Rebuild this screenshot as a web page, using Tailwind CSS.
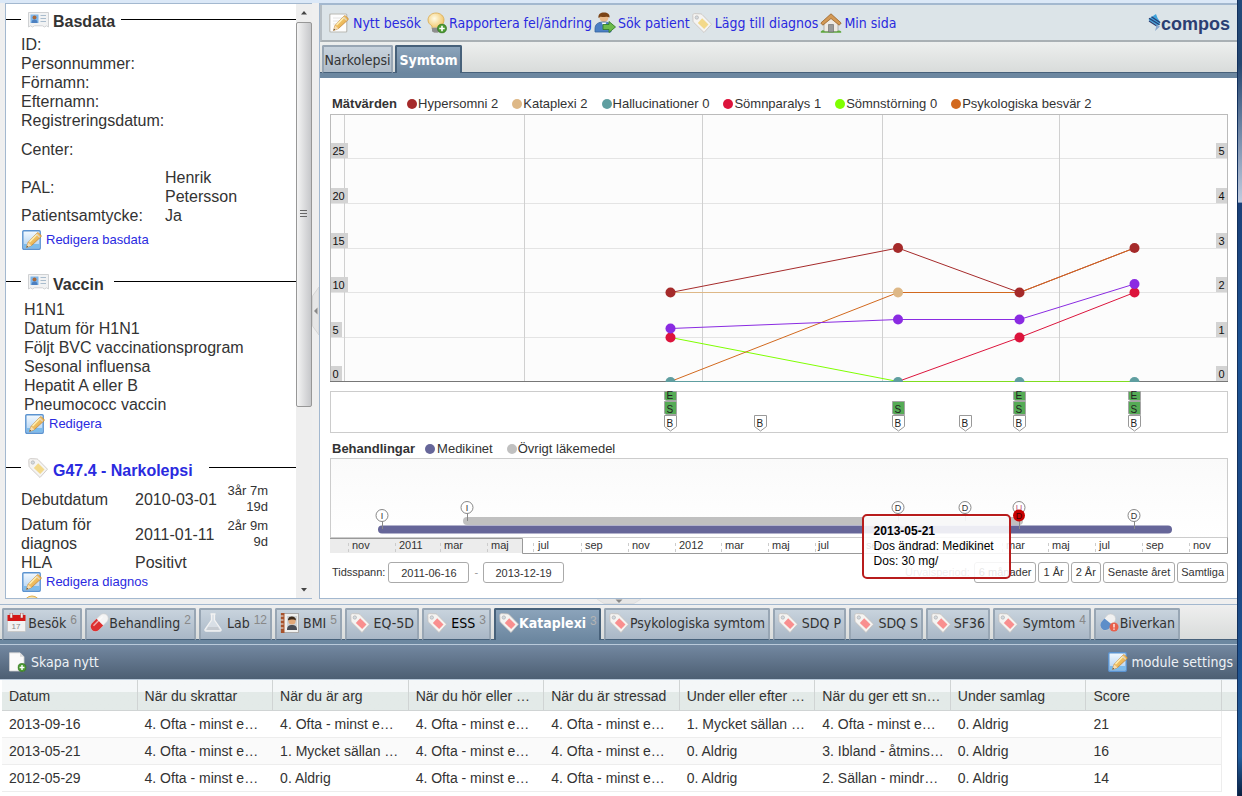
<!DOCTYPE html>
<html lang="sv">
<head>
<meta charset="utf-8">
<title>Compos</title>
<script src="https://cdn.jsdelivr.net/npm/@tailwindcss/browser@4"></script>
</head>
<body class="flex h-screen overflow-hidden bg-[#efefef] text-[#333] font-['Liberation_Sans',Arial,sans-serif]">

<svg class="absolute size-0" aria-hidden="true">
  <defs>
    <linearGradient id="gBlue" x1="0" y1="0" x2="0" y2="1"><stop offset="0" stop-color="#f4faff"/><stop offset="1" stop-color="#a9cdf0"/></linearGradient>
    <linearGradient id="gPen" x1="0" y1="0" x2="1" y2="1"><stop offset="0" stop-color="#fbe08a"/><stop offset="1" stop-color="#e09a35"/></linearGradient>
    <radialGradient id="gBulb" cx=".4" cy=".35" r=".7"><stop offset="0" stop-color="#fffbe6"/><stop offset="1" stop-color="#f0c05a"/></radialGradient>
    <symbol id="pencil" viewBox="0 0 20 20">
      <path d="M16.500 3 19 5.300c.5.5.5 1 0 1.500L9.500 15.500l-5 2 1.500-5 8.800-9.300c.5-.6 1.200-.6 1.700-.2z" fill="url(#gPen)" stroke="#c08030" stroke-width=".7"/>
      <path d="m7.500 12 7.500-7.800" stroke="#fff2b8" stroke-width="1.300"/><path d="m6 12.500 3.500 3-5 2z" fill="#f6dcb0"/><path d="m5 15.800 1.200 1-1.700.7z" fill="#444"/>
      <path d="m14.300 4 3.500 3.400" stroke="#e0d8c8" stroke-width="1.200"/>
    </symbol>
    <symbol id="edit" viewBox="0 0 20 20">
      <rect x=".8" y=".8" width="17.400" height="18.400" rx="1" fill="url(#gBlue)" stroke="#5b93d0" stroke-width="1.400"/>
      <path d="M2 14h15.500v4H2z" fill="#7dbcec"/><use href="#pencil"/>
    </symbol>
    <symbol id="note" viewBox="0 0 20 20">
      <rect x=".8" y="1" width="17" height="18" rx="1" fill="#fdfdfd" stroke="#b9b9b4" stroke-width="1.200"/>
      <path d="M4 5h9M4 8h7M4 11h4" stroke="#e4e4e4"/><use href="#pencil"/>
    </symbol>
    <symbol id="plus" viewBox="0 0 10 10"><circle cx="5" cy="5" r="4.500" fill="#4c9a32" stroke="#2f6e1e" stroke-width=".7"/><path d="M5 2.300v5.400M2.300 5h5.400" stroke="#fff" stroke-width="1.600"/></symbol>
    <symbol id="tag" viewBox="0 0 20 20">
      <path d="M.8 2.500C.8 1.300 1.500.6 2.600.6l6 .3c.6 0 1 .2 1.400.6l9.500 9.700-7.500 8.300L1.600 9.300c-.4-.4-.6-.9-.6-1.500z" fill="#f5f4f2" stroke="#c6c2be" stroke-width=".8"/>
      <circle cx="4.800" cy="4.500" r="1.700" fill="#d4dae0" stroke="#aaa" stroke-width=".6"/>
      <path d="m10.200 5.200 6.300 6.300-4.300 4.600-6.400-6.200z" fill="currentColor"/>
    </symbol>
    <symbol id="card" viewBox="0 0 21 16">
      <path d="M.5.5h20v14.500l-2-1.200-2 1.200-2-1.200h-8l-2 1.200-2-1.200-2 1.200z" fill="#f1f2f3" stroke="#cfd1d3"/>
      <rect x="2.500" y="2.500" width="8" height="8.500" fill="#7fb6ea"/><circle cx="6.500" cy="5.500" r="2" fill="#a8683a"/><path d="M3.500 11c0-2.500 1.200-3.500 3-3.500s3 1 3 3.500z" fill="#4d80c0"/>
      <path d="M12.500 3.500h5.500M12.500 6.500h5.500M12.500 9.500h5.500" stroke="#a9bccd"/>
    </symbol>
  </defs>
</svg>

<div class="flex min-w-0 flex-1 flex-col">
  <div class="h-[3px] shrink-0 bg-[#dbe8f7]"></div>

  <div class="flex min-h-0 flex-1">
    <!-- Patient summary -->
    <aside class="ml-[5px] flex w-[307px] shrink-0 border-y border-l border-[#a3b8cf] bg-white">
      <div class="min-w-0 flex-1 overflow-hidden">
        <section>
          <h2 class="flex h-[31px] items-center text-base font-bold">
            <span class="h-px w-[15px] bg-black"></span>
            <svg class="ml-[7px] h-4 w-[21px]"><use href="#card"/></svg>
            <span class="mr-1.5 ml-1 pt-1">Basdata</span>
            <span class="h-px flex-1 bg-black"></span>
          </h2>
          <table class="ml-[15px] text-base leading-[19px]">
            <tbody>
              <tr><td class="w-36">ID:</td><td></td></tr>
              <tr><td>Personnummer:</td><td></td></tr>
              <tr><td>Förnamn:</td><td></td></tr>
              <tr><td>Efternamn:</td><td></td></tr>
              <tr><td>Registreringsdatum:</td><td></td></tr>
              <tr><td class="pt-2.5 pb-[9px]">Center:</td><td></td></tr>
              <tr><td>PAL:</td><td class="w-24">Henrik Petersson</td></tr>
              <tr><td>Patientsamtycke:</td><td>Ja</td></tr>
            </tbody>
          </table>
          <a href="#" class="mt-1 ml-4 flex items-center gap-1 text-[13px] leading-5 text-[#2a2adf]"><svg class="h-[22px] w-5"><use href="#edit"/></svg>Redigera basdata</a>
        </section>
        <section class="mt-[15px]">
          <h2 class="flex h-[31px] items-center text-base font-bold">
            <span class="h-px w-[15px] bg-black"></span>
            <svg class="ml-[7px] h-4 w-[21px]"><use href="#card"/></svg>
            <span class="mr-2.5 ml-1 pt-1.5">Vaccin</span>
            <span class="h-px flex-1 bg-black"></span>
          </h2>
          <ul class="mt-[3px] ml-[18px] text-base leading-[19px]">
            <li>H1N1</li><li>Datum för H1N1</li><li>Följt BVC vaccinationsprogram</li><li>Sesonal influensa</li><li>Hepatit A eller B</li><li>Pneumococc vaccin</li>
          </ul>
          <a href="#" class="ml-[19px] flex items-center gap-1 text-[13px] leading-5 text-[#2a2adf]"><svg class="h-5 w-5"><use href="#edit"/></svg>Redigera</a>
        </section>
        <section class="mt-[18px]">
          <h2 class="flex h-[31px] items-center text-base font-bold">
            <span class="h-px w-[15px] bg-black"></span>
            <svg class="ml-[7px] h-5 w-5 text-[#f3d98a]"><use href="#tag"/></svg>
            <a href="#" class="mr-4 ml-[5px] pt-1.5 text-[#2a2adf]">G47.4 - Narkolepsi</a>
            <span class="h-px flex-1 bg-black"></span>
          </h2>
          <table class="ml-[15px] w-[247px] text-base leading-[19px]">
            <tbody>
              <tr><td class="w-[114px]">Debutdatum</td><td class="w-[85px]">2010-03-01</td><td class="text-right text-[13px] leading-4">3år 7m 19d</td></tr>
              <tr><td>Datum för diagnos</td><td>2011-01-11</td><td class="text-right text-[13px] leading-4">2år 9m 9d</td></tr>
              <tr><td>HLA</td><td>Positivt</td><td></td></tr>
            </tbody>
          </table>
          <a href="#" class="ml-4 flex items-center gap-1 text-[13px] leading-5 text-[#2a2adf]"><svg class="size-5"><use href="#edit"/></svg>Redigera diagnos</a>
          <svg class="mt-[3px] ml-4 h-5 w-5" viewBox="0 0 20 20"><circle cx="10" cy="9" r="8" fill="url(#gBulb)" stroke="#e0b050"/></svg>
        </section>
      </div>
      <!-- Scroll bar -->
      <div class="flex w-4 flex-col bg-[#eee]">
        <svg class="h-[18px] w-full shrink-0" viewBox="0 0 15 18"><path d="m4.500 10.500 3-3.500 3 3.500z" fill="#444"/></svg>
        <div class="flex h-[385px] items-center justify-center rounded-xs border border-[#979797] bg-linear-to-r from-[#f4f4f4] to-[#c6c7ca]">
          <svg class="h-[9px] w-2" viewBox="0 0 8 9"><path d="M0 .5h7M0 3.500h7M0 6.500h7" stroke="#666"/></svg>
        </div>
        <svg class="mt-auto h-[18px] w-full shrink-0" viewBox="0 0 15 18"><path d="m4.500 8 3 3.500 3-3.500z" fill="#444"/></svg>
      </div>
    </aside>

    <div class="flex w-[7px] shrink-0 flex-col justify-center pt-5">
      <svg class="h-12 w-[7px]" viewBox="0 0 7 48"><path d="M7 0v48L.5 39V9z" fill="#e6e6e6" stroke="#d4d4d4"/><path d="M5.500 20.500v7L2 24z" fill="#888"/></svg>
    </div>

    <!-- Main panel -->
    <main class="flex min-w-0 flex-1 flex-col border-t-2 border-b border-l border-[#a3b8cf] bg-white">
      <nav class="flex h-[37px] shrink-0 items-center border-b-2 border-l-2 border-b-[#a9b0b4] border-l-[#b5bdc3] bg-[#dce4e8] px-[7px] text-sm text-[#2a2adf] font-['DejaVu_Sans_Condensed','Noto_Sans',sans-serif]">
        <a href="#" class="flex w-[98px] items-center gap-1 whitespace-nowrap"><svg class="h-5 w-5 shrink-0"><use href="#note"/></svg>Nytt besök</a>
        <a href="#" class="mr-0.5 flex items-center gap-0.5 whitespace-nowrap">
          <svg class="h-[22px] w-5 shrink-0" viewBox="0 0 20 22"><path d="M9 1c4.500 0 8 3 8 7 0 3-1.500 4.500-3 6v3H5v-3C3 12.500 1 11 1 8c0-4 3.500-7 8-7z" fill="url(#gBulb)" stroke="#d9a94e" stroke-width=".8"/><path d="M5 15.500h8v3L11 21H7l-2-2.500z" fill="#aaa"/><path d="M5 17h8M5 19h8" stroke="#666" stroke-width=".8"/><use href="#plus" x="10" y="11.500" width="10" height="10"/></svg>Rapportera fel/ändring</a>
        <a href="#" class="mr-0.5 flex items-center gap-0.5 whitespace-nowrap">
          <svg class="h-[21px] w-[22px] shrink-0" viewBox="0 0 22 21"><circle cx="10" cy="5.500" r="4.500" fill="#e8b98a"/><path d="M4.500 6C4 2 6.500.5 10 .5s6 1.500 5.500 5C13 3.500 8 6 7 4.500z" fill="#7b4416"/><path d="M1 17c0-5 3-7 9-7s7 3 7 7v3H1z" fill="#4a80c4" stroke="#325f9c" stroke-width=".8"/><path d="m7.500 10.500 2.500 4 2.500-4z" fill="#fff"/><path d="M9 12.500h6V9.500l6.500 5.500-6.500 5.500v-3H9z" fill="#6dbb4b" stroke="#37802a" stroke-width=".9"/></svg>Sök patient</a>
        <a href="#" class="mr-0.5 flex items-center gap-[3px] whitespace-nowrap"><svg class="h-5 w-5 shrink-0 text-[#f3d98a]"><use href="#tag"/></svg>Lägg till diagnos</a>
        <a href="#" class="flex items-center gap-0.5 whitespace-nowrap">
          <svg class="h-5 w-[22px] shrink-0" viewBox="0 0 22 20"><path d="M4 10v8.500h14V10l-7-6z" fill="#eeeae4" stroke="#999" stroke-width=".7"/><path d="M.8 18.500c2-2 3-1.500 4 0h12c1-1.500 3-1.500 4.400 0v1.300H.8z" fill="#5ea63c"/><path d="M8.500 11.500h5V19h-5z" fill="#999" stroke="#666" stroke-width=".6"/><path d="M11 .8.800 10l2 2.200L11 5.500l8.200 6.700 2-2.200z" fill="#d39955" stroke="#996329" stroke-width=".8"/></svg>Min sida</a>
        <div class="ml-auto flex items-center text-lg font-bold text-[#2b3e73] font-['Liberation_Sans',Arial,sans-serif]">
          <svg class="h-[19px] w-[13px]" viewBox="0 0 13 19"><path d="M2 5 8 1l1.500 4 3 4.500L10 13 .5 7z" fill="#3fa3dc"/><path d="m1 5.300 10.600 6.400M1 8l9.300 6M3.500 3.800l8.500 5.700" stroke="#2b3e73" stroke-width="1.300"/><path d="m8.500 12 3.500 1.500-5 4.500 1-3.500z" fill="#8aa8cf"/></svg>
          <span class="pt-0.5">compos</span>
        </div>
      </nav>

      <div class="flex h-9 shrink-0 items-end gap-0.5 border-b-[5px] border-[#6c87a0] bg-linear-to-b from-[#edefee] to-[#d8dbda] pl-0.5 text-sm shadow-[inset_0_-1px_0_#47617a] font-['DejaVu_Sans_Condensed','Noto_Sans',sans-serif]">
        <button class="h-7 w-[71px] rounded-t-xs border-2 border-b border-[#98a6b4] border-b-[#47617a] bg-linear-to-b from-[#c8d3dd] to-[#b0bcc8] whitespace-nowrap">Narkolepsi</button>
        <button class="h-7 w-[67px] rounded-t-xs border-2 border-b-0 border-[#47617a] bg-linear-to-b from-[#8ba3ba] to-[#6c87a0] font-bold whitespace-nowrap text-white">Symtom</button>
      </div>

      <div class="pt-4 pr-[9px] pl-2.5">
        <div class="flex h-5 items-center gap-3.5 pl-0.5 text-[13px] whitespace-nowrap">
          <span class="-mr-1 font-bold">Mätvärden</span>
          <span class="flex items-center gap-px"><i class="size-2.5 rounded-full bg-[#a52a2a]"></i>Hypersomni 2</span>
          <span class="flex items-center gap-px"><i class="size-2.5 rounded-full bg-[#deb887]"></i>Kataplexi 2</span>
          <span class="flex items-center gap-px"><i class="size-2.5 rounded-full bg-[#5f9ea0]"></i>Hallucinationer 0</span>
          <span class="flex items-center gap-px"><i class="size-2.5 rounded-full bg-[#dc143c]"></i>Sömnparalys 1</span>
          <span class="flex items-center gap-px"><i class="size-2.5 rounded-full bg-[#7fff00]"></i>Sömnstörning 0</span>
          <span class="flex items-center gap-px"><i class="size-2.5 rounded-full bg-[#d2691e]"></i>Psykologiska besvär 2</span>
        </div>

        <svg class="block w-full text-[11px]" viewBox="330 114 898 268" fill="none">
          <rect x="330.500" y="114.500" width="897" height="270" fill="#fcfcfc" stroke="#bbb"/>
          <path d="M331 158.500h896M331 203.500h896M331 248.500h896M331 292.500h896M331 337.500h896" stroke="#e4e4e4"/>
          <path d="M344.500 115v267M524.500 115v267M702.500 115v267M882.500 115v267M1059.500 115v267" stroke="#d0d0d0"/>
          <path d="M331 143h17v15h-17zM331 188h17v15h-17zM331 233h17v15h-17zM331 277h17v15h-17zM331 322h11v15h-11zM331 366h11v15h-11zM1216 143h11v15h-11zM1216 188h11v15h-11zM1216 233h11v15h-11zM1216 277h11v15h-11zM1216 322h11v15h-11zM1216 366h11v15h-11z" fill="#d3d3d3"/>
          <g fill="#111">
            <text x="332.500" y="155">25</text><text x="332.500" y="200">20</text><text x="332.500" y="245">15</text><text x="332.500" y="289">10</text><text x="332.500" y="334">5</text><text x="332.500" y="378">0</text>
            <text x="1218.500" y="155">5</text><text x="1218.500" y="200">4</text><text x="1218.500" y="245">3</text><text x="1218.500" y="289">2</text><text x="1218.500" y="334">1</text><text x="1218.500" y="378">0</text>
          </g>
          <path d="M330 381.500h898" stroke="#777"/>
          <path d="M670 381.500h228" stroke="#5f9ea0"/><path d="M898 381.500h236" stroke="#7fdd20"/>
          <path d="M670.500 292.500h349" stroke="#deb887"/>
          <path d="m670.500 292.500 227.500-44.500 121.500 44.500 115-44.500" stroke="#a52a2a"/>
          <path d="m670.500 337.500 227.500 44" stroke="#7fff00"/>
          <path d="m898 381.500 121.500-44 115-45" stroke="#dc143c"/>
          <path d="M670.500 381.500 898 292.500h121.500l115-44.500" stroke="#d2691e"/>
          <path d="m670.500 328.500 227.500-9h121.500l115-35.500" stroke="#8a2be2"/>
          <g fill="#a52a2a"><circle cx="670.500" cy="292.500" r="5"/><circle cx="898" cy="248" r="5"/><circle cx="1019.500" cy="292.500" r="5"/><circle cx="1134.500" cy="248" r="5"/></g>
          <circle cx="898" cy="292.500" r="5" fill="#deb887"/>
          <g fill="#dc143c"><circle cx="670.500" cy="337.500" r="5"/><circle cx="1019.500" cy="337.500" r="5"/><circle cx="1134.500" cy="292.500" r="5"/></g>
          <g fill="#8a2be2"><circle cx="670.500" cy="328.500" r="5"/><circle cx="898" cy="319.500" r="5"/><circle cx="1019.500" cy="319.500" r="5"/><circle cx="1134.500" cy="284" r="5"/></g>
          <g fill="#5f9ea0"><circle cx="670.500" cy="382" r="5"/><circle cx="898" cy="382" r="5"/><circle cx="1019.500" cy="382" r="5"/><circle cx="1134.500" cy="382" r="5"/></g>
        </svg>

        <svg class="mt-[9px] block w-full text-[10px]" viewBox="330 391 898 42" fill="none">
          <defs>
            <g id="mB"><path d="M-6 415.500h12v11l-6 4.500-6-4.500z" fill="#fff" stroke="#999"/><text x="-4" y="427" fill="#222">B</text></g>
            <g id="mS"><path d="M-6 401.500h12v13h-10l-2-1z" fill="#55ab55" stroke="#a5a5a5"/><text x="-4" y="413" fill="#222">S</text></g>
            <g id="mE"><path d="M-6 391.500h12v9h-10l-2-1z" fill="#55ab55" stroke="#a5a5a5"/><text x="-4" y="399" fill="#222">E</text></g>
          </defs>
          <rect x="330.500" y="391.500" width="897" height="41" fill="#fff" stroke="#ccc"/>
          <use href="#mE" x="670.500"/><use href="#mS" x="670.500"/><use href="#mB" x="670.500"/>
          <use href="#mB" x="760.500"/><use href="#mS" x="898.500"/><use href="#mB" x="898.500"/><use href="#mB" x="965.500"/>
          <use href="#mE" x="1019.500"/><use href="#mS" x="1019.500"/><use href="#mB" x="1019.500"/>
          <use href="#mE" x="1134.500"/><use href="#mS" x="1134.500"/><use href="#mB" x="1134.500"/>
        </svg>

        <div class="flex h-[25px] items-center gap-3.5 pt-1.5 pl-0.5 text-[13px] whitespace-nowrap">
          <span class="-mr-1 font-bold">Behandlingar</span>
          <span class="flex items-center gap-0.5"><i class="size-2.5 rounded-full bg-[#666699]"></i>Medikinet</span>
          <span class="flex items-center gap-px"><i class="size-2.5 rounded-full bg-[#c0c0c0]"></i>Övrigt läkemedel</span>
        </div>

        <div class="relative text-[11px]">
          <svg class="block w-full" viewBox="330 458 898 96" fill="none">
            <defs>
              <linearGradient id="gT" x1="0" y1="0" x2="0" y2="1"><stop offset="0" stop-color="#fafafa"/><stop offset="1" stop-color="#fff"/></linearGradient>
            </defs>
            <rect x="330.500" y="458.500" width="897" height="79" fill="url(#gT)" stroke="#ccc"/>
            <path d="M467 521h552" stroke="#c0c0c0" stroke-width="8" stroke-linecap="round"/>
            <path d="M382 529.500h786" stroke="#666699" stroke-width="8" stroke-linecap="round"/>
            <path d="M330 538h192v15H330z" fill="#ececec"/>
            <path d="M330 538.500h192.500v15h705v-16" stroke="#999"/>
            <path d="M348.500 543v10M395.500 543v10M440.500 543v10M487.500 543v10M533.500 543v10M581.500 543v10M628.500 543v10M675.500 543v10M721.500 543v10M768.500 543v10M815.500 543v10M862.500 543v10M909.500 543v10M956.500 543v10M1002.500 543v10M1048.500 543v10M1095.500 543v10M1142.500 543v10M1189.500 543v10" stroke="#ccc" stroke-dasharray="3 3"/>
            <g fill="#333">
              <text x="352" y="549">nov</text><text x="399" y="549">2011</text><text x="444" y="549">mar</text><text x="491" y="549">maj</text><text x="538" y="549">jul</text><text x="585" y="549">sep</text><text x="632" y="549">nov</text><text x="679" y="549">2012</text><text x="725" y="549">mar</text><text x="772" y="549">maj</text><text x="818" y="549">jul</text><text x="866" y="549">sep</text><text x="913" y="549">nov</text><text x="960" y="549">2013</text><text x="1006" y="549">mar</text><text x="1052" y="549">maj</text><text x="1099" y="549">jul</text><text x="1146" y="549">sep</text><text x="1193" y="549">nov</text>
            </g>
            <path d="M382.500 521v8M467.500 513v8M898.500 513v8M965.500 513v8M1134.500 521v8M1019.500 521v8" stroke="#888"/>
            <g fill="#fff" stroke="#888"><circle cx="382" cy="515.500" r="6"/><circle cx="467" cy="507.500" r="6"/><circle cx="898" cy="507.500" r="6"/><circle cx="965" cy="507.500" r="6"/><circle cx="1019" cy="507.500" r="6"/><circle cx="1134" cy="515.500" r="6"/></g>
            <g class="text-[9px]" fill="#333" text-anchor="middle">
              <text x="382" y="519">I</text><text x="467" y="511">I</text><text x="898" y="511">D</text><text x="965" y="511">D</text><text x="1019" y="511" fill="#c06080">U</text><text x="1134" y="519">D</text>
              <circle cx="1019" cy="515.500" r="6" fill="#c80000"/><text x="1019" y="519" fill="#400">D</text>
            </g>
          </svg>
          <form class="mt-2 flex h-[21px] items-center pl-0.5">
            <label for="from">Tidsspann:</label>
            <input id="from" value="2011-06-16" class="ml-[3px] h-[21px] w-[81px] rounded-[3px] border border-[#aaa] bg-white text-center">
            <span class="mx-[5px] text-[#999]">-</span>
            <input aria-label="Till" value="2013-12-19" class="h-[21px] w-[81px] rounded-[3px] border border-[#aaa] bg-white text-center">
            <span class="mr-1 ml-auto text-[#777]">Urvalsperiod:</span>
            <div class="flex gap-0.5 whitespace-nowrap">
              <button type="button" class="h-[21px] rounded-[3px] border border-[#aaa] bg-white px-1">6 månader</button>
              <button type="button" class="h-[21px] rounded-[3px] border border-[#aaa] bg-white px-1">1 År</button>
              <button type="button" class="h-[21px] rounded-[3px] border border-[#aaa] bg-white px-1">2 År</button>
              <button type="button" class="h-[21px] rounded-[3px] border border-[#aaa] bg-white px-1">Senaste året</button>
              <button type="button" class="h-[21px] rounded-[3px] border border-[#aaa] bg-white px-[3px]">Samtliga</button>
            </div>
          </form>
          <div role="tooltip" class="absolute top-14 left-[59.2%] h-[65px] w-[149px] rounded-[5px] border-2 border-[#b81c1c] bg-white/88 px-2.5 pt-2 text-xs leading-[15px] whitespace-nowrap text-black">
            <strong class="block">2013-05-21</strong>Dos ändrad: Medikinet<br>Dos: 30 mg/
          </div>
        </div>
      </div>
    </main>
  </div>

  <div class="flex h-[5px] shrink-0 justify-center">
    <svg class="h-[5px] w-11" viewBox="0 0 44 5"><path d="m0 0 7 4.500h30L44 0" fill="#e6e6e6" stroke="#ddd"/><path d="M18.500.5h7L22 4z" fill="#888"/></svg>
  </div>

  <!-- Modules -->
  <section class="shrink-0 border-t border-[#a3b8cf] bg-white">
    <nav class="flex h-[39px] items-end gap-[3px] border-b-4 border-[#6c87a0] bg-linear-to-b from-[#efefef] to-[#d8dbda] pl-0.5 text-sm whitespace-nowrap shadow-[inset_0_-1px_0_#47617a] font-['DejaVu_Sans_Condensed','Noto_Sans',sans-serif]">
      <button class="flex h-8 w-20 items-center justify-between rounded-t-xs border-2 border-b border-[#98a6b4] border-b-[#47617a] bg-linear-to-b from-[#c8d3dd] to-[#a9b7c6] px-[3px] pb-1">
        <svg class="h-[19px] w-[19px] shrink-0" viewBox="0 0 19 19"><rect x=".5" y="2" width="18" height="16.500" rx="1" fill="#f2f2f2" stroke="#c9c9c9"/><path d="M.5 2h18v6H.5z" fill="#d41616"/><path d="M3 0h2.500v5H3zM13.500 0H16v5h-2.500z" fill="#eee" stroke="#a33" stroke-width=".5"/><text x="4.500" y="16" font-size="8" font-family="Liberation Sans" fill="#888">17</text></svg>
        <span>Besök <sup class="-top-1 text-xs text-[#888] font-['Liberation_Sans']">6</sup></span></button>
      <button class="flex h-8 w-[111px] items-center justify-between rounded-t-xs border-2 border-b border-[#98a6b4] border-b-[#47617a] bg-linear-to-b from-[#c8d3dd] to-[#a9b7c6] px-[3px] pb-1">
        <svg class="h-[19px] w-[19px] shrink-0" viewBox="0 0 19 19"><g transform="rotate(-45 9.500 9.500)"><rect x="-1" y="4.800" width="21" height="9.400" rx="4.700" fill="#f4f4f4" stroke="#ccc" stroke-width=".6"/><path d="M10 4.800H3.700a4.700 4.700 0 0 0 0 9.400H10z" fill="#dd3030"/><path d="M3 7.500h13" stroke="#fff" stroke-opacity=".6" stroke-width="1.500"/></g></svg>
        <span>Behandling <sup class="-top-1 text-xs text-[#888] font-['Liberation_Sans']">2</sup></span></button>
      <button class="flex h-8 w-[73px] items-center justify-between rounded-t-xs border-2 border-b border-[#98a6b4] border-b-[#47617a] bg-linear-to-b from-[#c8d3dd] to-[#a9b7c6] px-[3px] pb-1">
        <svg class="h-[19px] w-[18px] shrink-0" viewBox="0 0 18 19"><path d="M6.500 1h5M7.500 1v6L1 16.500c-.3 1 .2 1.500 1 1.500h14c.8 0 1.300-.5 1-1.500L10.500 7V1" fill="#e6eaee" fill-opacity=".7" stroke="#f2f2f2" stroke-width="1.300"/><path d="M4 14h10l1.500 3h-13z" fill="#c6cbd1"/></svg>
        <span>Lab <sup class="-top-1 text-xs text-[#888] font-['Liberation_Sans']">12</sup></span></button>
      <button class="flex h-8 w-[67px] items-center justify-between rounded-t-xs border-2 border-b border-[#98a6b4] border-b-[#47617a] bg-linear-to-b from-[#c8d3dd] to-[#a9b7c6] px-[3px] pb-1">
        <svg class="h-5 w-[19px] shrink-0" viewBox="0 0 19 20"><rect x="1" y=".5" width="17.500" height="19" fill="#f0f0ee" stroke="#a9a9a9"/><path d="M1 0h3.500v20H1z" fill="#a8532c"/><path d="M.5 3h3M.5 7h3M.5 11h3M.5 15h3" stroke="#eee"/><path d="M7 3h10v14H7z" fill="#cfd3d6"/><circle cx="12" cy="8" r="3.600" fill="#e2a878"/><path d="M8 7.500c0-3.500 2-4 4-4s4 1 4 4c-2-1.500-6-1-8 0z" fill="#3d2a1a"/><path d="M7 17c0-4 2-5 5-5s5 1 5 5z" fill="#4a4d55"/></svg>
        <span>BMI <sup class="-top-1 text-xs text-[#888] font-['Liberation_Sans']">5</sup></span></button>
      <button class="flex h-8 w-[74px] items-center justify-between rounded-t-xs border-2 border-b border-[#98a6b4] border-b-[#47617a] bg-linear-to-b from-[#c8d3dd] to-[#a9b7c6] px-[3px] pb-1"><svg class="size-5 shrink-0 text-[#f98f8f]"><use href="#tag"/></svg>EQ-5D</button>
      <button class="flex h-8 w-[69px] items-center justify-between rounded-t-xs border-2 border-b border-[#98a6b4] border-b-[#47617a] bg-linear-to-b from-[#c8d3dd] to-[#a9b7c6] px-[3px] pb-1 text-black"><svg class="size-5 shrink-0 text-[#f98f8f]"><use href="#tag"/></svg><span>ESS <sup class="-top-1 text-xs text-[#888] font-['Liberation_Sans']">3</sup></span></button>
      <button class="flex h-8 w-[107px] items-center justify-between rounded-t-xs border-2 border-b-0 border-[#47617a] bg-linear-to-b from-[#8ba3ba] to-[#6c87a0] px-[3px] pb-1 font-bold text-white"><svg class="size-5 shrink-0 text-[#f98f8f]"><use href="#tag"/></svg><span class="flex gap-1">Kataplexi<sup class="top-0.5 text-xs leading-none font-normal text-[#b4b4b4] font-['Liberation_Sans']">3</sup></span></button>
      <button class="flex h-8 w-[166px] items-center justify-between rounded-t-xs border-2 border-b border-[#98a6b4] border-b-[#47617a] bg-linear-to-b from-[#c8d3dd] to-[#a9b7c6] px-[3px] pb-1"><svg class="size-5 shrink-0 text-[#f98f8f]"><use href="#tag"/></svg>Psykologiska symtom</button>
      <button class="flex h-8 w-[73px] items-center justify-between rounded-t-xs border-2 border-b border-[#98a6b4] border-b-[#47617a] bg-linear-to-b from-[#c8d3dd] to-[#a9b7c6] px-[3px] pb-1"><svg class="size-5 shrink-0 text-[#f98f8f]"><use href="#tag"/></svg>SDQ P</button>
      <button class="flex h-8 w-[74px] items-center justify-between rounded-t-xs border-2 border-b border-[#98a6b4] border-b-[#47617a] bg-linear-to-b from-[#c8d3dd] to-[#a9b7c6] px-[3px] pb-1"><svg class="size-5 shrink-0 text-[#f98f8f]"><use href="#tag"/></svg>SDQ S</button>
      <button class="flex h-8 w-16 items-center justify-between rounded-t-xs border-2 border-b border-[#98a6b4] border-b-[#47617a] bg-linear-to-b from-[#c8d3dd] to-[#a9b7c6] px-[3px] pb-1"><svg class="size-5 shrink-0 text-[#f98f8f]"><use href="#tag"/></svg>SF36</button>
      <button class="flex h-8 w-[98px] items-center justify-between rounded-t-xs border-2 border-b border-[#98a6b4] border-b-[#47617a] bg-linear-to-b from-[#c8d3dd] to-[#a9b7c6] px-[3px] pb-1"><svg class="size-5 shrink-0 text-[#f98f8f]"><use href="#tag"/></svg><span>Symtom <sup class="-top-1 text-xs text-[#888] font-['Liberation_Sans']">4</sup></span></button>
      <button class="flex h-8 w-[86px] items-center justify-between rounded-t-xs border-2 border-b border-[#98a6b4] border-b-[#47617a] bg-linear-to-b from-[#c8d3dd] to-[#a9b7c6] px-[3px] pb-1">
        <svg class="h-[19px] w-5 shrink-0" viewBox="0 0 20 19"><g transform="rotate(-50 9 9)"><rect x="0" y="4" width="18" height="10" rx="5" fill="#f1f1f1" stroke="#ccc" stroke-width=".6"/><path d="M9.500 4H5a5 5 0 0 0 0 10h4.500z" fill="#5d8ec9"/></g><circle cx="15" cy="14" r="4.500" fill="#e8604c"/><path d="M15 11v3.500M15 15.500v1.200" stroke="#fff" stroke-width="1.300"/></svg>Biverkan</button>
    </nav>

    <div class="flex h-9 items-center justify-between border-y border-[#b9c9da] bg-linear-to-b from-[#7388a1] to-[#4d5f73] pr-1 pl-2 text-sm text-[#eef2f6] font-['DejaVu_Sans_Condensed','Noto_Sans',sans-serif]">
      <button class="flex items-center gap-1"><svg class="h-5 w-[19px]" viewBox="0 0 19 20"><path d="M1.500.8H12l4 4V19H1.500z" fill="#fafafa" stroke="#d0d0d0" stroke-width=".8"/><path d="M12 .8v4h4z" fill="#ddd"/><use href="#plus" x="9.500" y="11" width="9" height="9"/></svg>Skapa nytt</button>
      <button class="flex items-center gap-1"><svg class="size-5"><use href="#edit"/></svg>module settings</button>
    </div>

    <table class="w-full table-fixed border-separate border-spacing-0 pl-0.5 text-sm whitespace-nowrap">
      <thead>
        <tr class="h-[31px] text-left [&>th]:truncate [&>th]:border-r [&>th]:border-b [&>th]:border-[#d0d4d4] [&>th]:bg-linear-to-b [&>th]:from-[#f4f7f8] [&>th]:from-40% [&>th]:to-[#e3eae8] [&>th]:to-40% [&>th]:px-[7px] [&>th]:pt-0.5 [&>th]:font-normal">
          <th>Datum</th><th>När du skrattar</th><th>När du är arg</th><th>När du hör eller …</th><th>När du är stressad</th><th>Under eller efter …</th><th>När du ger ett sn…</th><th>Under samlag</th><th>Score</th><th class="w-[15px] border-r-0!"></th>
        </tr>
      </thead>
      <tbody class="[&_td]:truncate [&_td]:border-b [&_td]:border-[#ededed] [&_td]:px-[7px] [&_td:nth-child(9)]:border-r [&_td:last-child]:border-b-0">
        <tr class="h-[27px]"><td>2013-09-16</td><td>4. Ofta - minst e…</td><td>4. Ofta - minst e…</td><td>4. Ofta - minst e…</td><td>4. Ofta - minst e…</td><td>1. Mycket sällan …</td><td>4. Ofta - minst e…</td><td>0. Aldrig</td><td>21</td><td></td></tr>
        <tr class="h-[27px] bg-[#fafafa]"><td>2013-05-21</td><td>4. Ofta - minst e…</td><td>1. Mycket sällan …</td><td>4. Ofta - minst e…</td><td>4. Ofta - minst e…</td><td>0. Aldrig</td><td>3. Ibland - åtmins…</td><td>0. Aldrig</td><td>16</td><td class="bg-white"></td></tr>
        <tr class="h-[27px]"><td>2012-05-29</td><td>4. Ofta - minst e…</td><td>0. Aldrig</td><td>4. Ofta - minst e…</td><td>4. Ofta - minst e…</td><td>0. Aldrig</td><td>2. Sällan - mindr…</td><td>0. Aldrig</td><td>14</td><td></td></tr>
      </tbody>
    </table>
    <div class="h-1"></div>
  </section>
</div>

<div class="w-[5px] shrink-0 border-l border-[#12305c] bg-[linear-gradient(to_bottom,#214a7b_0,#244670_8%,#c0cce0_25.4%,#1a4078_25.5%,#1e5596_45%,#1a4580_70%,#235f9f_95%,#0a2040_100%)]"></div>
</body>
</html>
